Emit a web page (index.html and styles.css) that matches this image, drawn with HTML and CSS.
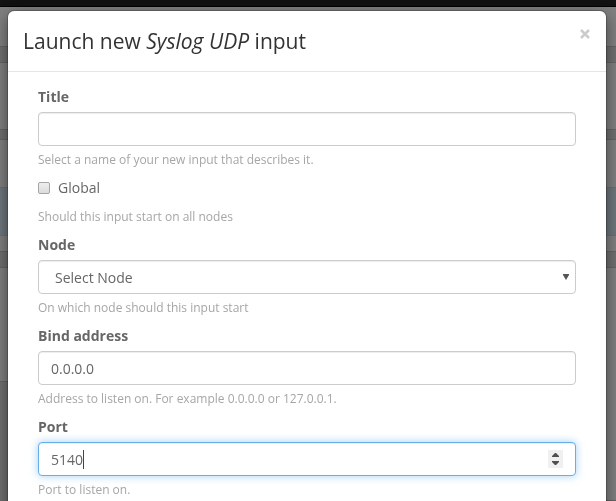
FILE: index.html
```html
<!DOCTYPE html>
<html lang="en">
<head>
<meta charset="utf-8">
<meta name="viewport" content="width=device-width, initial-scale=1">
<title>Launch new Syslog UDP input</title>
<link rel="stylesheet" href="styles.css">
</head>
<body>
<div class="page" aria-hidden="true">
  <div class="navbar"></div>
  <div class="panel panel-header"></div>
  <div class="panel panel-intro"></div>
  <div class="panel panel-inputs">
    <div class="notice"></div>
  </div>
  <div class="columns">
    <div class="panel panel-short"></div>
    <div class="panel panel-list"></div>
  </div>
</div>

<div class="overlay">
  <div class="modal" role="dialog" aria-modal="true" aria-labelledby="modal-title">
    <header class="modal-header">
      <h2 class="modal-title" id="modal-title">Launch new <em>Syslog UDP</em> input</h2>
      <button class="close" type="button" aria-label="Close">
        <svg class="close-icon" viewBox="0 0 24 24" aria-hidden="true"><path d="M4 4 20 20M20 4 4 20"/></svg>
      </button>
    </header>
    <form class="modal-body">
      <div class="field">
        <label class="label" for="title">Title</label>
        <input class="control" id="title" type="text">
        <p class="help">Select a name of your new input that describes it.</p>
      </div>
      <div class="field field-check">
        <label class="check-label" for="global"><input class="check" id="global" type="checkbox">Global</label>
        <p class="help">Should this input start on all nodes</p>
      </div>
      <div class="field">
        <label class="label" for="node">Node</label>
        <div class="control-wrap">
          <select class="control select" id="node"><option>Select Node</option></select>
          <svg class="arrow" viewBox="0 0 6 6" aria-hidden="true"><path d="M0 0h6v1L3 6 0 1z"/></svg>
        </div>
        <p class="help">On which node should this input start</p>
      </div>
      <div class="field">
        <label class="label" for="bind">Bind address</label>
        <input class="control" id="bind" type="text" value="0.0.0.0">
        <p class="help">Address to listen on. For example 0.0.0.0 or 127.0.0.1.</p>
      </div>
      <div class="field">
        <label class="label" for="port">Port</label>
        <div class="control-wrap">
          <input class="control number active" id="port" type="number" value="5140">
          <span class="caret"></span>
          <svg class="spinner" viewBox="0 0 15 18" aria-hidden="true"><path d="M4 7V6L7 3h1l3 3v1zM4 11v1l3 3h1l3-3v-1z"/></svg>
        </div>
        <p class="help">Port to listen on.</p>
      </div>
    </form>
  </div>
</div>
</body>
</html>
```
FILE: styles.css
```css
* {
  box-sizing: border-box;
}

body {
  margin: 0;
  overflow: hidden;
  color: #666;
  background: #dedfde;
  font: 14px/20px "Open Sans", "Noto Sans", sans-serif;
}

/* Page behind the dialog */
.page {
  display: flex;
  flex-direction: column;
  min-height: 100vh;
}

.navbar {
  height: 7px;
  background: #222;
  border-bottom: 1px solid #000;
}

.panel {
  background: #fff;
  border-bottom: 1px solid #c8c8c8;
}

.panel-header {
  height: 40px;
  margin-bottom: 15px;
}

.panel-intro {
  height: 68px;
  margin-bottom: 9px;
  border-top: 1px solid #c8c8c8;
}

.panel-inputs {
  height: 113px;
  margin-bottom: 15px;
  padding-top: 47px;
  border-top: 1px solid #c8c8c8;
}

.notice {
  height: 49px;
  background: #d9edf7;
  border: solid #bce8f1;
  border-width: 1px 0;
}

.columns {
  display: grid;
  flex: 1;
  grid-template-columns: 1fr 1fr;
  gap: 20px;
}

.panel-short {
  height: 115px;
  border-top: 1px solid #c8c8c8;
}

.panel-list {
  border-top: 1px solid #c8c8c8;
}

/* Dialog */
.overlay {
  position: fixed;
  inset: 0;
  overflow: hidden;
  padding: 11px 10px 0 8px;
  background: rgba(0, 0, 0, 0.5);
}

.modal {
  background: #fff;
  border-radius: 6px;
  box-shadow: 0 0 0 1px rgba(0, 0, 0, 0.2), 0 5px 15px rgba(0, 0, 0, 0.5);
}

.modal-header {
  display: flex;
  align-items: flex-start;
  justify-content: space-between;
  padding: 15px;
  border-bottom: 1px solid #e5e5e5;
}

.modal-title {
  margin: 0;
  color: #333;
  font-size: 21px;
  font-weight: 400;
  line-height: 30px;
}

.close {
  display: flex;
  padding: 2px 0;
  border: 0;
  background: none;
  cursor: pointer;
}

.close-icon {
  width: 12px;
  height: 12px;
  fill: none;
  stroke: #ccc;
  stroke-width: 5;
}

.modal-body {
  padding: 15px 30px 30px;
}

.field {
  margin-bottom: 10px;
}

.label {
  display: block;
  margin-bottom: 5px;
  font-weight: 700;
}

.control {
  display: block;
  width: 100%;
  height: 34px;
  margin: 0;
  padding: 6px 12px;
  border: 1px solid #ccc;
  border-radius: 4px;
  outline: 0;
  color: #666;
  background: #fff;
  box-shadow: inset 0 1px 1px rgba(0, 0, 0, 0.075);
  font: inherit;
}

.control-wrap {
  position: relative;
}

.select {
  padding: 7px 16px 5px;
  appearance: none;
}

.arrow {
  position: absolute;
  top: 14px;
  right: 7px;
  width: 6px;
  height: 6px;
  fill: #555;
  pointer-events: none;
}

.number {
  appearance: textfield;
}

.active {
  border-color: #66afe9;
  box-shadow: inset 0 1px 1px rgba(0, 0, 0, 0.075), 0 0 8px rgba(102, 175, 233, 0.6);
}

.caret {
  position: absolute;
  top: 8px;
  left: 45px;
  width: 1px;
  height: 19px;
  background: #444;
}

.spinner {
  position: absolute;
  top: 8px;
  right: 13px;
  width: 15px;
  height: 18px;
  background: #f0f0f0;
  fill: #505050;
}

.help {
  margin: 5px 0 0;
  color: #a6a6a6;
  font-size: 12px;
  line-height: 17px;
}

.field-check .help {
  margin-top: 10px;
}

.check-label {
  display: flex;
  align-items: center;
  gap: 8px;
}

.check {
  width: 12px;
  height: 12px;
  margin: 0;
  border: 1px solid #a6a6a6;
  border-radius: 2px;
  background: linear-gradient(#eee, #dcdcdc);
  appearance: none;
}
```
